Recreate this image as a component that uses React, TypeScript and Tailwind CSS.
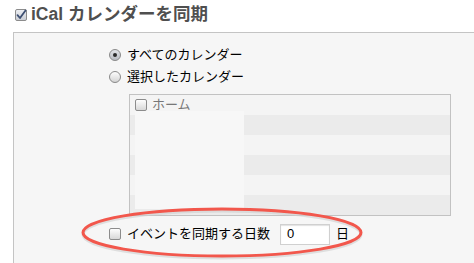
const font = "font-['Liberation_Sans','Noto_Sans_CJK_JP',sans-serif]";

function Checkbox({ checked = false }: { checked?: boolean }) {
  return (
    <svg width="12" height="12" viewBox="0 0 12 12" className="shrink-0">
      <defs>
        <linearGradient id={checked ? "cbOn" : "cbOff"} x1="0" y1="0" x2="0" y2="1">
          <stop offset="0" stopColor={checked ? "#eef0f4" : "#ffffff"} />
          <stop offset="1" stopColor={checked ? "#c9ccd3" : "#d6d6d6"} />
        </linearGradient>
      </defs>
      <rect x="0.5" y="0.5" width="11" height="11" rx="1.5" fill={`url(#${checked ? "cbOn" : "cbOff"})`} stroke="#8c8c8c" />
      {checked && <path d="M2.5 6.2 L5 9 L10.5 1.5" fill="none" stroke="#3d4f72" strokeWidth="1.8" strokeLinecap="round" strokeLinejoin="round" />}
    </svg>
  );
}

function Radio({ checked = false }: { checked?: boolean }) {
  return (
    <svg width="12" height="12" viewBox="0 0 12 12" className="shrink-0">
      <defs>
        <linearGradient id={checked ? "rOn" : "rOff"} x1="0" y1="0" x2="0" y2="1">
          <stop offset="0" stopColor={checked ? "#e4e6ea" : "#ffffff"} />
          <stop offset="1" stopColor={checked ? "#b7bac1" : "#d2d2d2"} />
        </linearGradient>
      </defs>
      <circle cx="6" cy="6" r="5.5" fill={`url(#${checked ? "rOn" : "rOff"})`} stroke="#8a8a8a" />
      {checked && <circle cx="6" cy="6" r="2" fill="#2b2b2b" />}
    </svg>
  );
}

export default function App() {
  const rows = [0, 1, 2, 3, 4, 5];
  return (
    <div className={`relative h-[263px] w-[474px] overflow-hidden bg-white ${font}`}>
      <div className="flex h-[32px] items-center gap-[4px] pb-[3px] pl-[15px]">
        <Checkbox checked />
        <span className="text-[17.5px] font-bold leading-none text-[#4f4f4f]">iCal カレンダーを同期</span>
      </div>

      <div className="ml-[13px] h-[231px] border-l border-t border-[#c4c4c4] bg-[#f6f6f6] pl-[95px] pt-[11px]">
        <div className="flex h-[22px] items-center gap-[6px] text-[13px] text-black">
          <Radio checked />
          <span>すべてのカレンダー</span>
        </div>
        <div className="flex h-[22px] items-center gap-[6px] text-[13px] text-black">
          <Radio />
          <span>選択したカレンダー</span>
        </div>

        <div className="relative ml-[20px] mt-[6px] w-[322px] border border-[#c2c2c2]">
          {rows.map((i) => (
            <div key={i} className={`flex h-[20px] items-center gap-[5px] pl-[5px] ${i % 2 === 0 ? "bg-[#f4f4f4]" : "bg-[#ebebeb]"}`}>
              {i === 0 && (
                <>
                  <Checkbox />
                  <span className="text-[13px] text-[#777777]">ホーム</span>
                </>
              )}
            </div>
          ))}
          <div className="absolute left-[5px] top-[16px] h-[98px] w-[109px] bg-[#f7f7f7]" />
        </div>

        <div className="mt-[6px] flex h-[24px] items-center text-[13px] text-black">
          <Checkbox />
          <span className="ml-[6px]">イベントを同期する日数</span>
          <div className="ml-[10px] flex h-[21px] w-[50px] items-center border border-[#d0d0d0] bg-white pl-[6px] text-[13px] shadow-[inset_0_1px_1px_rgba(0,0,0,0.12)]">0</div>
          <span className="ml-[6px]">日</span>
        </div>
      </div>

      <svg className="pointer-events-none absolute left-0 top-0" width="474" height="263">
        <ellipse cx="222" cy="234.5" rx="139" ry="23.5" fill="none" stroke="#cfcfcf" strokeWidth="3" opacity="0.6" />
        <ellipse cx="222" cy="232.5" rx="139" ry="23.5" fill="none" stroke="#f2574c" strokeWidth="3" />
      </svg>
    </div>
  );
}
